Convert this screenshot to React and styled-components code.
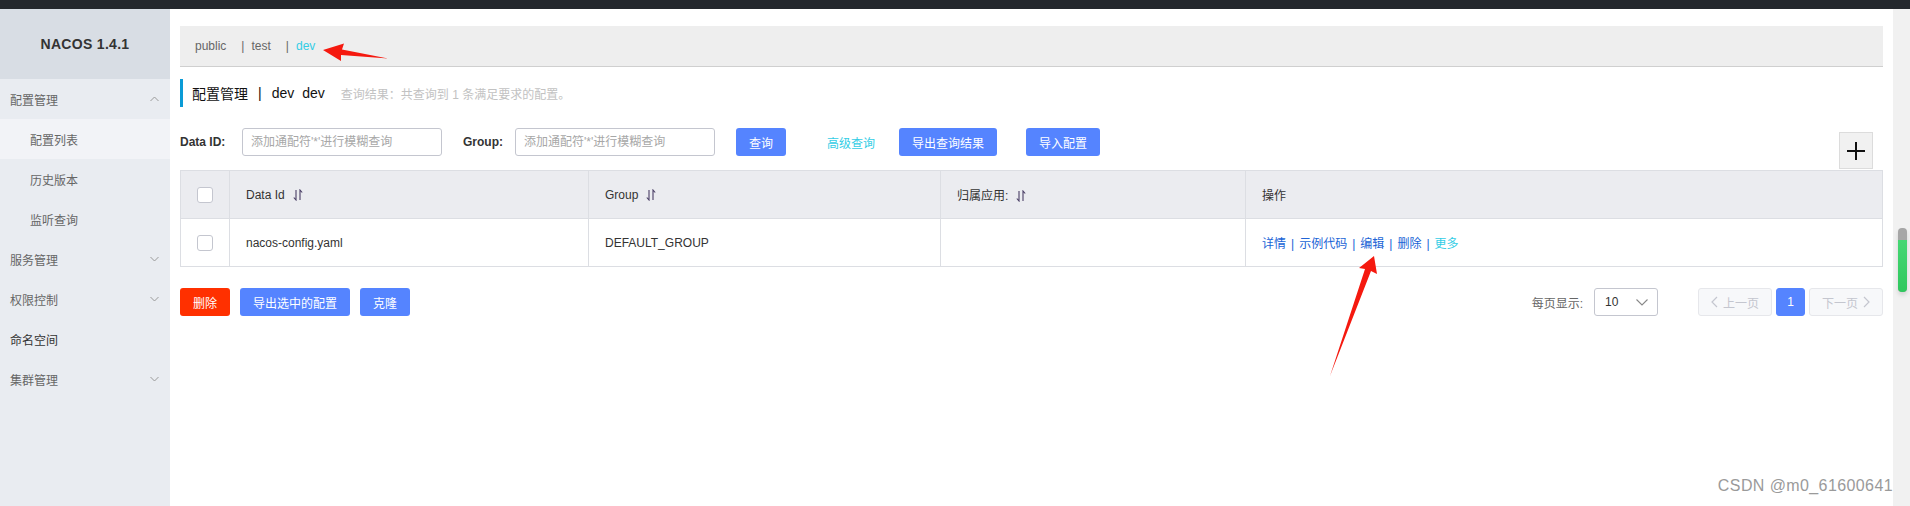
import React from "react";
import styled, { createGlobalStyle } from "styled-components";

const Global = createGlobalStyle`
  html, body { margin: 0; padding: 0; }
  body {
    font-family: "Liberation Sans", "Noto Sans CJK SC", Arial, sans-serif;
    font-size: 12px;
    color: #333;
    background: #fff;
    overflow: hidden;
  }
  * { box-sizing: border-box; }
`;

const Page = styled.div`
  position: relative;
  width: 1910px;
  height: 506px;
  display: flex;
  flex-direction: column;
`;

const TopBar = styled.div`
  height: 9px;
  flex: none;
  background: #24282d;
`;

const Body = styled.div`
  flex: 1;
  display: flex;
  min-height: 0;
`;

const Sidebar = styled.aside`
  width: 170px;
  flex: none;
  background: #e9ecf1;
  display: flex;
  flex-direction: column;
`;

const Logo = styled.div`
  height: 70px;
  background: #d8dde4;
  display: flex;
  align-items: center;
  justify-content: center;
  font-weight: bold;
  font-size: 14px;
  color: #333;
  letter-spacing: 0.3px;
`;

const MenuItem = styled.div`
  height: 40px;
  display: flex;
  align-items: center;
  justify-content: space-between;
  padding-left: ${(p) => (p.$sub ? 30 : 10)}px;
  padding-right: 11px;
  font-size: 12px;
  color: ${(p) => (p.$dark ? "#333" : "#666")};
  background: ${(p) => (p.$active ? "#f2f3f7" : "transparent")};
`;

const Main = styled.main`
  flex: 1;
  min-width: 0;
  padding: 17px 10px 0 10px;
  display: flex;
  flex-direction: column;
`;

const NsBar = styled.div`
  height: 41px;
  flex: none;
  background: #eeeeee;
  border-bottom: 1px solid #cfcfcf;
  display: flex;
  align-items: center;
  padding-left: 15px;
  font-size: 12px;
  color: #666;
`;

const NsItem = styled.span`
  margin-right: 15px;
  color: ${(p) => (p.$active ? "#33cde5" : "#666")};
`;

const NsSep = styled.span`
  color: #666;
  margin-right: 7px;
`;

const Heading = styled.div`
  margin-top: 12px;
  height: 28px;
  flex: none;
  border-left: 3px solid #0a9bd6;
  padding-left: 9px;
  display: flex;
  align-items: center;
  font-size: 14px;
  color: #111;
`;

const HeadPart = styled.span`
  margin-right: ${(p) => p.$mr || 0}px;
`;

const HeadNote = styled.span`
  margin-left: 16px;
  font-size: 12px;
  color: #c2c2c2;
`;

const SearchRow = styled.div`
  margin-top: 21px;
  height: 42px;
  flex: none;
  display: flex;
  align-items: flex-start;
`;

const Label = styled.label`
  width: ${(p) => p.$w}px;
  flex: none;
  line-height: 28px;
  font-weight: bold;
  font-size: 12px;
  color: #333;
`;

const Input = styled.input`
  width: 200px;
  height: 28px;
  flex: none;
  border: 1px solid #c4c6cf;
  border-radius: 3px;
  padding: 0 8px;
  font-family: inherit;
  font-size: 12px;
  color: #333;
  margin-right: ${(p) => p.$mr || 0}px;
  outline: none;
  &::placeholder { color: #a7a7a7; }
`;

const Button = styled.button`
  height: 28px;
  flex: none;
  padding: 0 13px;
  border: none;
  border-radius: 3px;
  background: ${(p) => (p.$danger ? "#ff3000" : "#5584ff")};
  color: #fff;
  font-family: inherit;
  font-size: 12px;
  margin-left: ${(p) => p.$ml || 0}px;
  cursor: pointer;
`;

const TextButton = styled.button`
  height: 28px;
  flex: none;
  padding: 0 12px;
  border: none;
  background: transparent;
  color: #33cde5;
  font-family: inherit;
  font-size: 12px;
  margin-left: ${(p) => p.$ml || 0}px;
`;

const AddButton = styled.button`
  margin-left: auto;
  margin-right: 10px;
  margin-top: 4px;
  width: 34px;
  height: 37px;
  flex: none;
  border: 1px solid #dcdcdc;
  background: #f1f1f1;
  display: flex;
  align-items: center;
  justify-content: center;
  padding: 0;
`;

const Table = styled.table`
  width: 100%;
  border-collapse: collapse;
  table-layout: fixed;
  font-size: 12px;
`;

const Th = styled.th`
  height: 48px;
  background: #ebecf0;
  border: 1px solid #dcdee3;
  text-align: ${(p) => (p.$center ? "center" : "left")};
  padding: 0 ${(p) => (p.$center ? 0 : 16)}px;
  font-weight: normal;
  color: #333;
`;

const Td = styled.td`
  height: 48px;
  border: 1px solid #dcdee3;
  text-align: ${(p) => (p.$center ? "center" : "left")};
  padding: 0 ${(p) => (p.$center ? 0 : 16)}px;
  color: #333;
`;

const Check = styled.span`
  display: inline-block;
  width: 16px;
  height: 16px;
  border: 1px solid #c4c6cf;
  border-radius: 3px;
  background: #fff;
  vertical-align: middle;
`;

const SortIcon = styled.svg`
  margin-left: 8px;
  vertical-align: -2px;
`;

const Action = styled.a`
  color: ${(p) => (p.$more ? "#33cde5" : "#2064d6")};
  text-decoration: none;
`;

const ActionSep = styled.span`
  color: #2064d6;
  margin: 0 5px;
`;

const BottomBar = styled.div`
  margin-top: 21px;
  height: 28px;
  display: flex;
  align-items: center;
  justify-content: space-between;
`;

const Group = styled.div`
  display: flex;
  align-items: center;
`;

const PageLabel = styled.span`
  color: #666;
  font-size: 12px;
  margin-right: 11px;
`;

const Select = styled.div`
  width: 64px;
  height: 28px;
  border: 1px solid #c4c6cf;
  border-radius: 3px;
  display: flex;
  align-items: center;
  justify-content: space-between;
  padding: 0 9px 0 10px;
  color: #333;
  font-size: 12px;
`;

const PageBtn = styled.div`
  height: 28px;
  width: ${(p) => p.$w}px;
  margin-left: ${(p) => p.$ml}px;
  border-radius: 3px;
  border: 1px solid ${(p) => (p.$current ? "#5584ff" : "#e6e7eb")};
  background: ${(p) => (p.$current ? "#5584ff" : "#f7f8fa")};
  color: ${(p) => (p.$current ? "#fff" : "#c4c6cf")};
  display: flex;
  align-items: center;
  justify-content: center;
  gap: 5px;
  font-size: 12px;
`;

const ScrollTrack = styled.div`
  width: 17px;
  flex: none;
  background: #f1f1f1;
  padding-top: 219px;
  padding-left: 5px;
`;

const ScrollThumb = styled.div`
  width: 9px;
  height: 64px;
  border-radius: 4px;
  background: #a6a6a6;
  padding-top: 12px;
  box-shadow: 0 3px 4px rgba(0, 0, 0, 0.12);
`;

const ScrollGreen = styled.div`
  width: 9px;
  height: 52px;
  border-radius: 0 0 4px 4px;
  background: linear-gradient(#46d774, #2fc85e);
`;

const Watermark = styled.div`
  position: absolute;
  right: 17px;
  bottom: 11px;
  font-family: "Liberation Sans", Arial, sans-serif;
  font-size: 16px;
  letter-spacing: 0.4px;
  color: #9a9a9a;
  text-shadow: 0 0 2px #fff;
`;

const Overlay = styled.svg`
  position: absolute;
  left: 0;
  top: 0;
  pointer-events: none;
`;

const Chevron = ({ up }) => (
  <svg width="9" height="6" viewBox="0 0 9 6">
    <polyline
      points={up ? "0.5,5 4.5,1 8.5,5" : "0.5,1 4.5,5 8.5,1"}
      fill="none"
      stroke="#999"
      strokeWidth="1"
    />
  </svg>
);

const Sort = () => (
  <SortIcon width="10" height="12" viewBox="0 0 10 12">
    <path d="M3 1 V11 L0.8 8.5" fill="none" stroke="#4a3f66" strokeWidth="1.1" />
    <path d="M7 11 V1 L9.2 3.5" fill="none" stroke="#4a3f66" strokeWidth="1.1" />
  </SortIcon>
);

const ArrowL = () => (
  <svg width="7" height="12" viewBox="0 0 7 12">
    <polyline points="6,1 1,6 6,11" fill="none" stroke="#c4c6cf" strokeWidth="1.2" />
  </svg>
);
const ArrowR = () => (
  <svg width="7" height="12" viewBox="0 0 7 12">
    <polyline points="1,1 6,6 1,11" fill="none" stroke="#c4c6cf" strokeWidth="1.2" />
  </svg>
);

const menu = [
  { label: "配置管理", chevron: "up" },
  { label: "配置列表", sub: true, active: true },
  { label: "历史版本", sub: true },
  { label: "监听查询", sub: true },
  { label: "服务管理", chevron: "down" },
  { label: "权限控制", chevron: "down" },
  { label: "命名空间", dark: true },
  { label: "集群管理", chevron: "down" },
];

export default function App() {
  return (
    <Page>
      <Global />
      <TopBar />
      <Body>
        <Sidebar>
          <Logo>NACOS 1.4.1</Logo>
          {menu.map((m) => (
            <MenuItem key={m.label} $sub={m.sub} $active={m.active} $dark={m.dark}>
              <span>{m.label}</span>
              {m.chevron && <Chevron up={m.chevron === "up"} />}
            </MenuItem>
          ))}
        </Sidebar>

        <Main>
          <NsBar>
            <NsItem>public</NsItem>
            <NsItem>
              <NsSep>|</NsSep>test
            </NsItem>
            <NsItem $active>
              <NsSep>|</NsSep>dev
            </NsItem>
          </NsBar>

          <Heading>
            <HeadPart $mr={10}>配置管理</HeadPart>
            <HeadPart $mr={10}>|</HeadPart>
            <HeadPart $mr={8}>dev</HeadPart>
            <HeadPart>dev</HeadPart>
            <HeadNote>查询结果：共查询到 1 条满足要求的配置。</HeadNote>
          </Heading>

          <SearchRow>
            <Label $w={62}>Data ID:</Label>
            <Input placeholder="添加通配符'*'进行模糊查询" $mr={21} />
            <Label $w={52}>Group:</Label>
            <Input placeholder="添加通配符'*'进行模糊查询" />
            <Button $ml={21}>查询</Button>
            <TextButton $ml={29}>高级查询</TextButton>
            <Button $ml={12}>导出查询结果</Button>
            <Button $ml={29}>导入配置</Button>
            <AddButton>
              <svg width="20" height="20" viewBox="0 0 20 20">
                <path d="M10 1 V19 M1 10 H19" stroke="#111" strokeWidth="2" />
              </svg>
            </AddButton>
          </SearchRow>

          <Table>
            <colgroup>
              <col style={{ width: 49 }} />
              <col style={{ width: 359 }} />
              <col style={{ width: 352 }} />
              <col style={{ width: 305 }} />
              <col />
            </colgroup>
            <thead>
              <tr>
                <Th $center>
                  <Check />
                </Th>
                <Th>
                  Data Id
                  <Sort />
                </Th>
                <Th>
                  Group
                  <Sort />
                </Th>
                <Th>
                  归属应用:
                  <Sort />
                </Th>
                <Th>操作</Th>
              </tr>
            </thead>
            <tbody>
              <tr>
                <Td $center>
                  <Check />
                </Td>
                <Td>nacos-config.yaml</Td>
                <Td>DEFAULT_GROUP</Td>
                <Td />
                <Td>
                  <Action>详情</Action>
                  <ActionSep>|</ActionSep>
                  <Action>示例代码</Action>
                  <ActionSep>|</ActionSep>
                  <Action>编辑</Action>
                  <ActionSep>|</ActionSep>
                  <Action>删除</Action>
                  <ActionSep>|</ActionSep>
                  <Action $more>更多</Action>
                </Td>
              </tr>
            </tbody>
          </Table>

          <BottomBar>
            <Group>
              <Button $danger>删除</Button>
              <Button $ml={10}>导出选中的配置</Button>
              <Button $ml={10}>克隆</Button>
            </Group>
            <Group>
              <PageLabel>每页显示:</PageLabel>
              <Select>
                <span>10</span>
                <svg width="12" height="7" viewBox="0 0 12 7">
                  <polyline points="0.5,0.5 6,6 11.5,0.5" fill="none" stroke="#888" strokeWidth="1.1" />
                </svg>
              </Select>
              <PageBtn $w={74} $ml={40}>
                <ArrowL />
                上一页
              </PageBtn>
              <PageBtn $w={29} $ml={4} $current>
                1
              </PageBtn>
              <PageBtn $w={74} $ml={4}>
                下一页
                <ArrowR />
              </PageBtn>
            </Group>
          </BottomBar>
        </Main>

        <ScrollTrack>
          <ScrollThumb>
            <ScrollGreen />
          </ScrollThumb>
        </ScrollTrack>
      </Body>

      <Watermark>CSDN @m0_61600641</Watermark>

      <Overlay width="1910" height="506" viewBox="0 0 1910 506">
        <path d="M323 50 L344 43.5 L342 49.5 L388 58.5 L341 55 L341 61 Z" fill="#f5190f" />
        <path d="M1374 256 L1377 274 L1371 271 L1330 376 L1365 269 L1359 268 Z" fill="#f5190f" />
      </Overlay>
    </Page>
  );
}
